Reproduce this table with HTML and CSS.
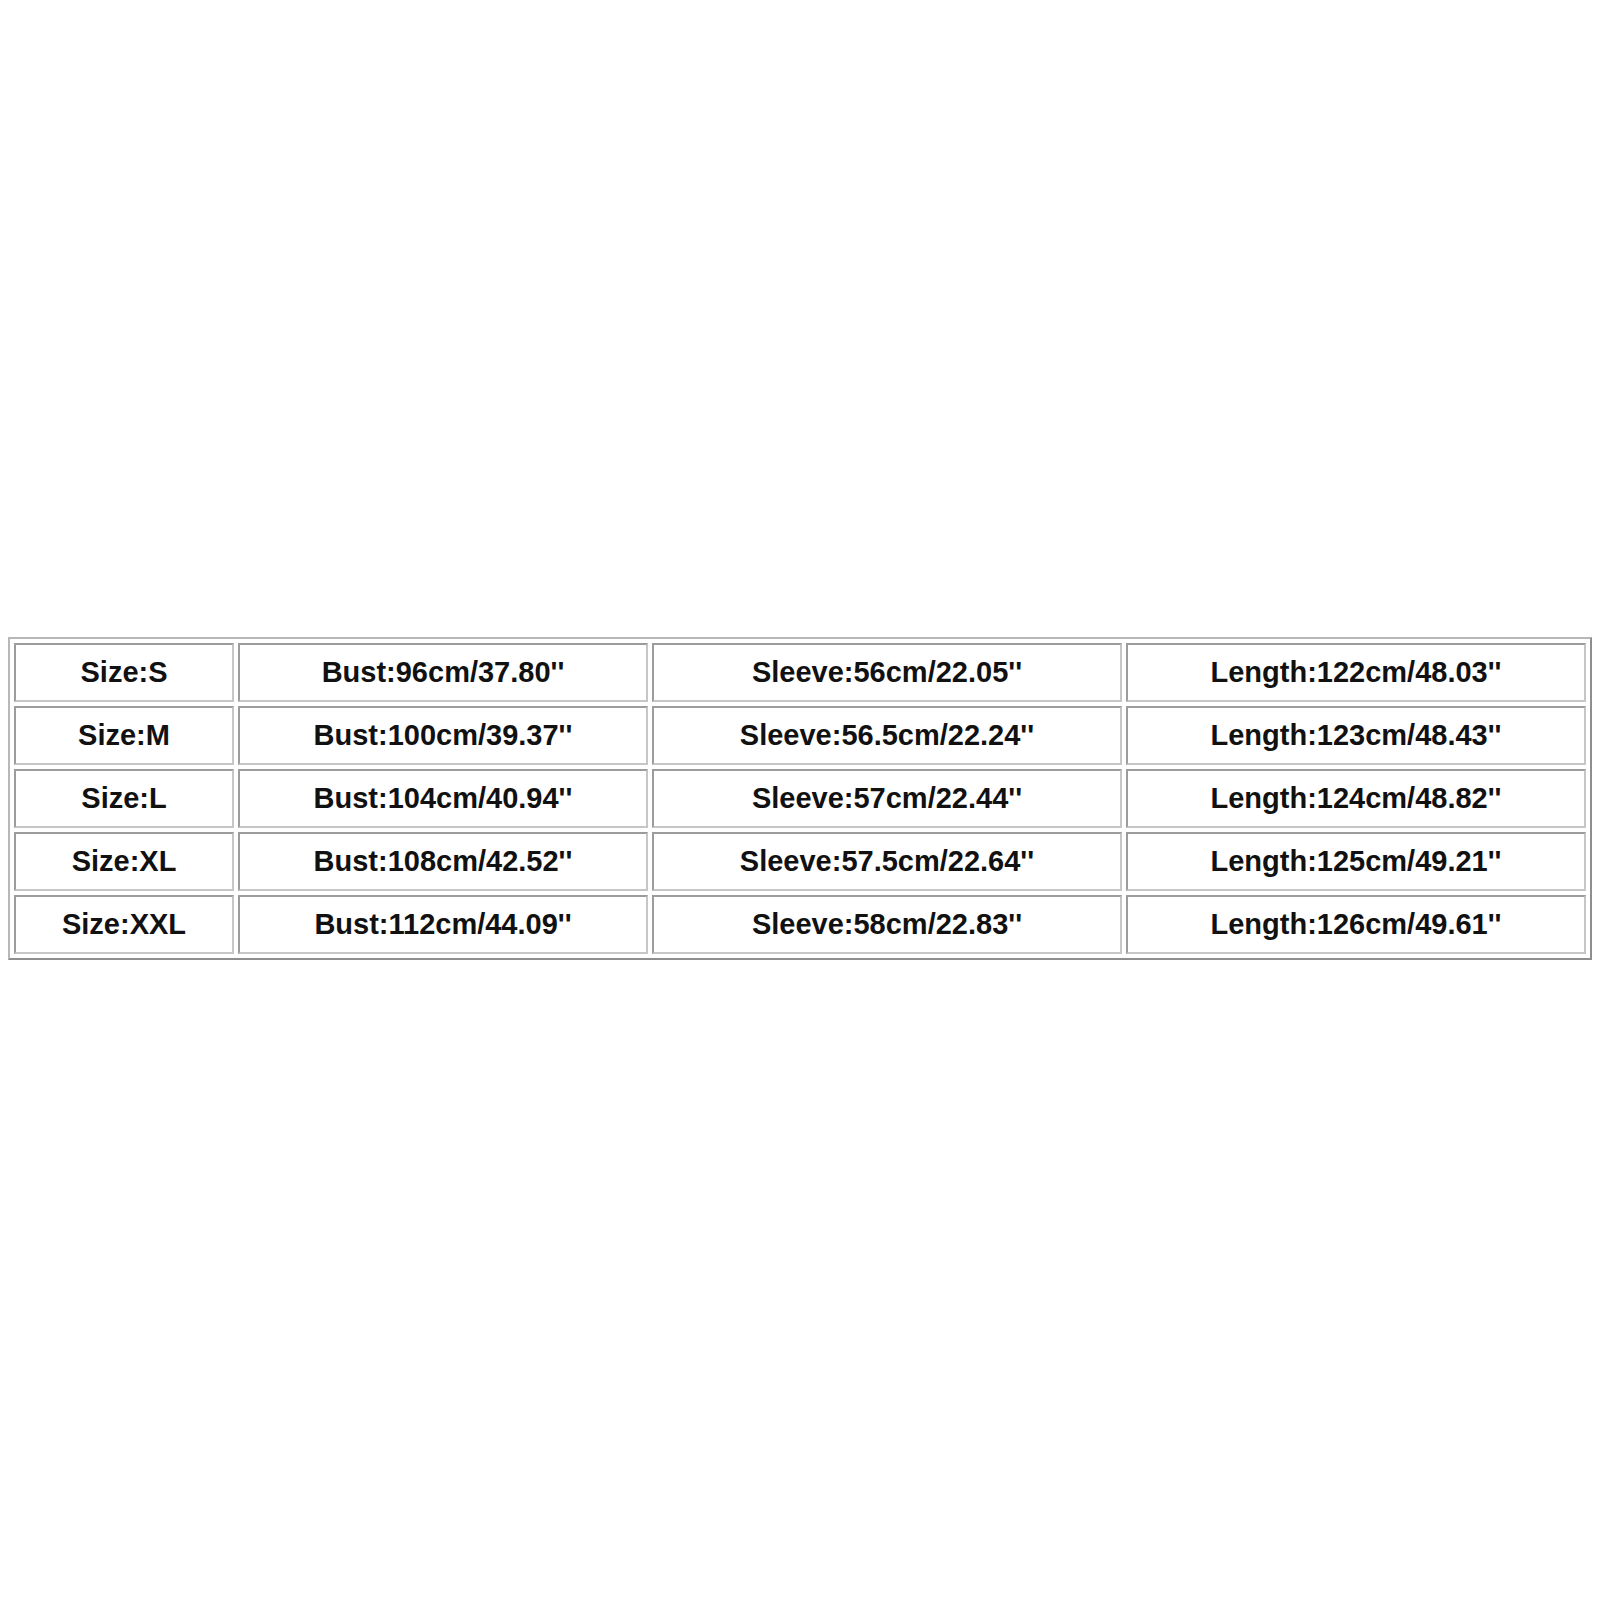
FILE: index.html
```html
<!DOCTYPE html>
<html>
<head>
<meta charset="utf-8">
<link rel="stylesheet" href="styles.css">
</head>
<body>
<div class="page">
  <table class="sizes">
    <colgroup>
      <col class="c1"><col class="c2"><col class="c3"><col class="c4">
    </colgroup>
    <tbody>
      <tr><td>Size:S</td><td>Bust:96cm/37.80''</td><td>Sleeve:56cm/22.05''</td><td>Length:122cm/48.03''</td></tr>
      <tr><td>Size:M</td><td>Bust:100cm/39.37''</td><td>Sleeve:56.5cm/22.24''</td><td>Length:123cm/48.43''</td></tr>
      <tr><td>Size:L</td><td>Bust:104cm/40.94''</td><td>Sleeve:57cm/22.44''</td><td>Length:124cm/48.82''</td></tr>
      <tr><td>Size:XL</td><td>Bust:108cm/42.52''</td><td>Sleeve:57.5cm/22.64''</td><td>Length:125cm/49.21''</td></tr>
      <tr><td>Size:XXL</td><td>Bust:112cm/44.09''</td><td>Sleeve:58cm/22.83''</td><td>Length:126cm/49.61''</td></tr>
    </tbody>
  </table>
</div>
</body>
</html>
```
FILE: styles.css
```css
html, body {
  margin: 0;
  padding: 0;
  background: #ffffff;
}
.page {
  width: 1600px;
  height: 1600px;
  padding: 637px 0 0 8px;
  box-sizing: border-box;
}
.sizes {
  width: 1584px;
  table-layout: fixed;
  border-collapse: separate;
  border-spacing: 4px;
  border: 2px solid #b8b8b8;
  border-right-color: #8e8e8e;
  border-bottom-color: #8e8e8e;
  font-family: "Liberation Sans", Arial, sans-serif;
  font-weight: bold;
  font-size: 29px;
  color: #111111;
}
.c1 { width: 220px; }
.c2 { width: 410px; }
.c3 { width: 470px; }
.c4 { width: 460px; }
.sizes td {
  height: 55px;
  padding: 0;
  text-align: center;
  vertical-align: middle;
  border: 2px solid #9c9c9c;
  border-right-color: #c6c6c6;
  border-bottom-color: #c6c6c6;
  line-height: 1;
  white-space: nowrap;
}
```
